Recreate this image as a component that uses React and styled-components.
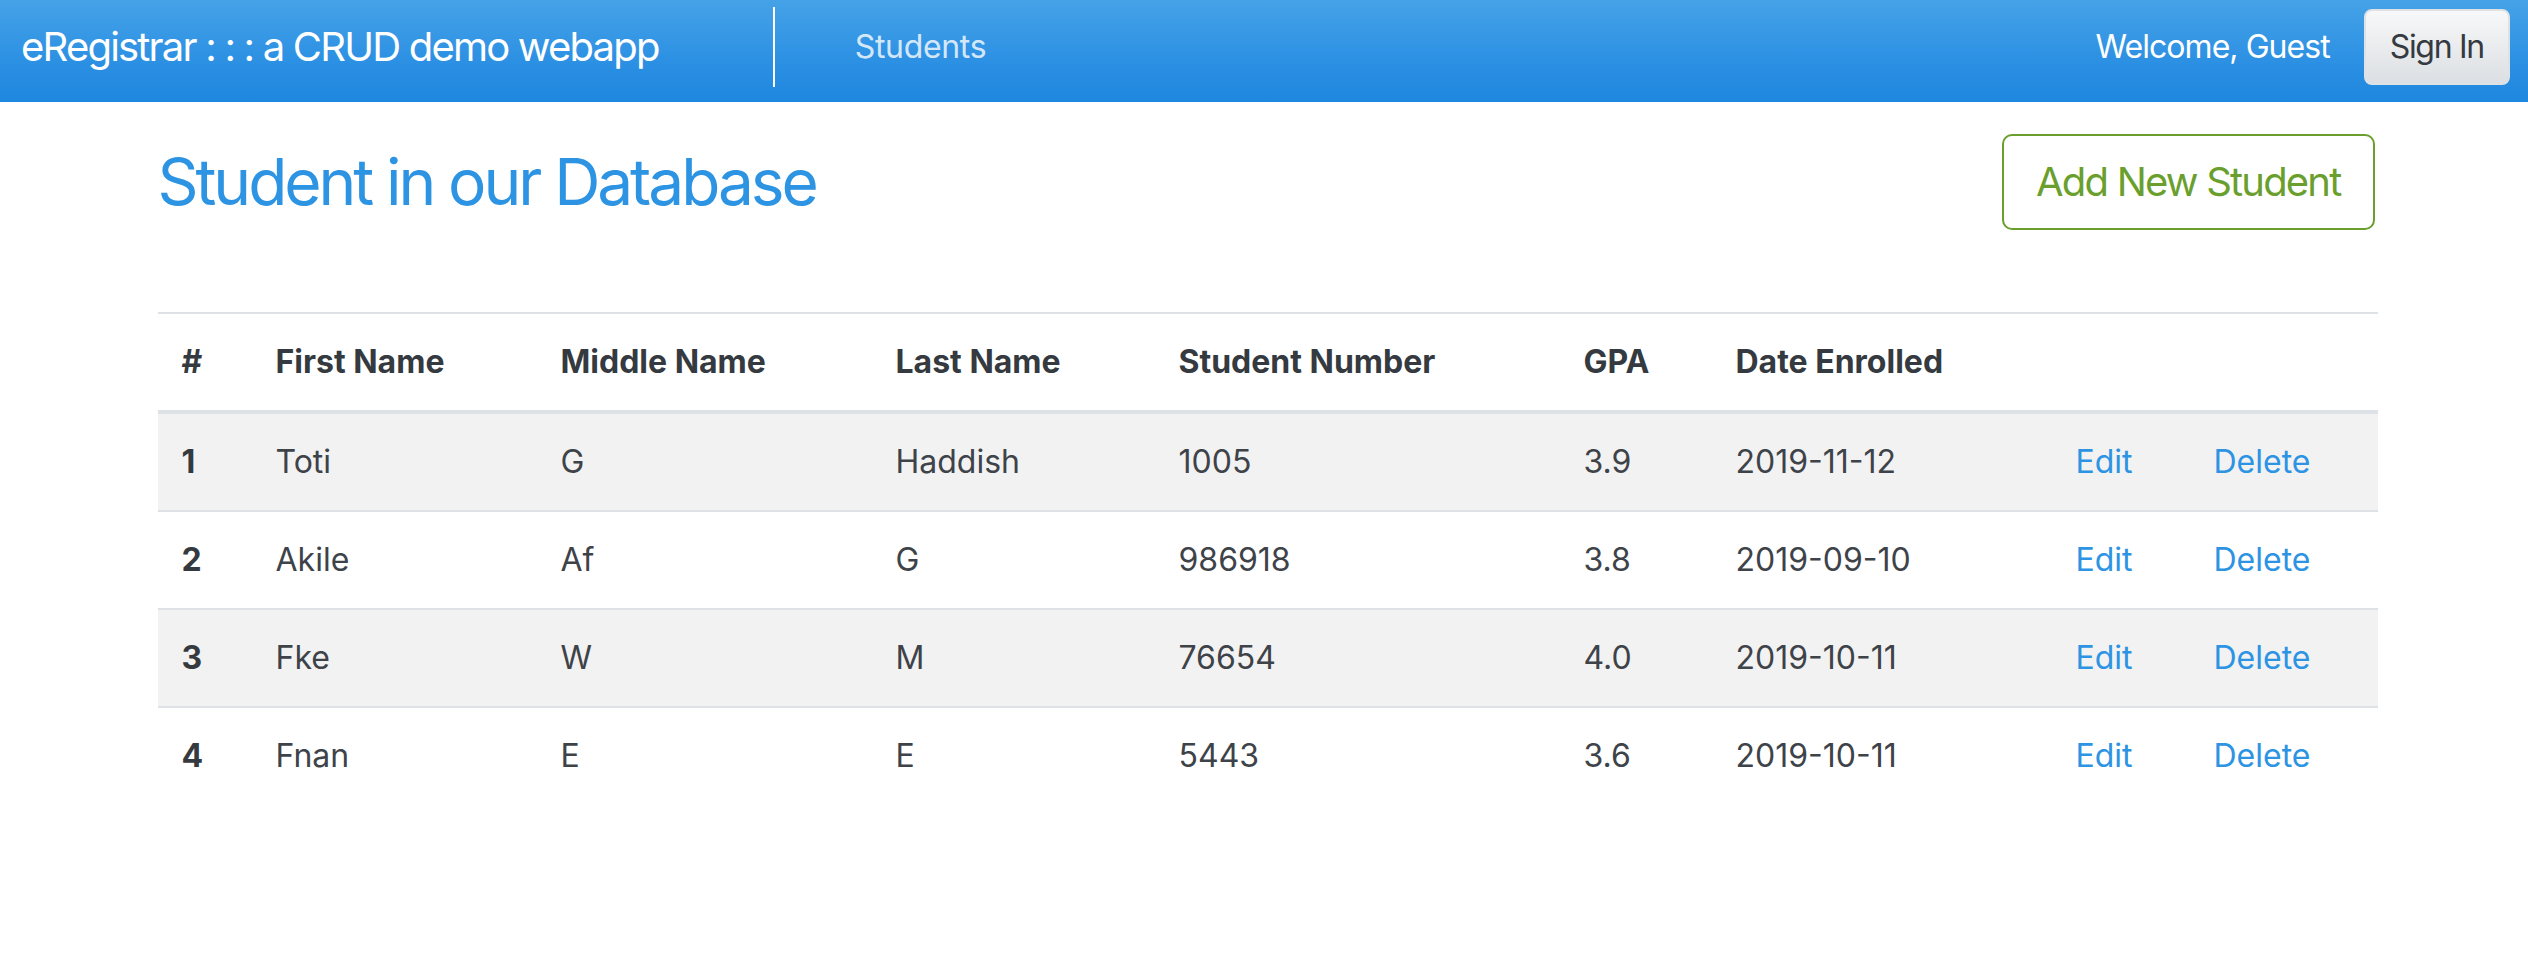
import React from "react";
import styled, { createGlobalStyle } from "styled-components";

const GlobalStyle = createGlobalStyle`
  html, body { margin: 0; padding: 0; background: #ffffff; }
  body {
    font-family: Inter, "Liberation Sans", Arial, sans-serif;
    font-size: 32px;
    line-height: 1.5;
    color: #3e4349;
  }
  * { box-sizing: border-box; }
`;

const NavBar = styled.nav`
  height: 102px;
  display: flex;
  align-items: center;
  padding: 0 18px 8px 21px;
  background: linear-gradient(#45a2e7, #2c90e3 60%, #1e87df);
`;

const Brand = styled.a`
  font-size: 40px;
  letter-spacing: -0.045em;
  color: #ffffff;
  text-decoration: none;
  white-space: nowrap;
  line-height: 1.5;
`;

const Divider = styled.span`
  width: 2px;
  height: 80px;
  background: #ffffff;
  margin-left: ${(p) => p.$left}px;
  margin-right: 80px;
  align-self: center;
`;

const NavLink = styled.a`
  font-size: 32px;
  letter-spacing: -0.01em;
  color: rgba(255, 255, 255, 0.8);
  text-decoration: none;
`;

const Spacer = styled.div`
  flex: 1;
`;

const Welcome = styled.span`
  font-size: 32px;
  letter-spacing: -0.03em;
  color: #ffffff;
  margin-right: 34px;
`;

const SignInButton = styled.button`
  font-family: inherit;
  font-size: 32px;
  letter-spacing: -0.04em;
  line-height: 1.5;
  color: #343a40;
  height: 76px;
  padding: 0 24px;
  border: 2px solid #dfe2e5;
  border-radius: 8px;
  background: linear-gradient(#f7f8f9, #dcdfe3);
`;

const Page = styled.div`
  padding-left: 7px;
`;

const Container = styled.main`
  max-width: 2220px;
  margin: 0 auto;
`;

const HeaderRow = styled.div`
  display: flex;
  align-items: center;
  justify-content: space-between;
  margin-top: 32px;
`;

const Title = styled.h2`
  margin: 0;
  font-size: 64px;
  letter-spacing: -0.048em;
  font-weight: 400;
  line-height: 1.2;
  color: #2d93e3;
`;

const OutlineButton = styled.button`
  font-family: inherit;
  font-size: 40px;
  letter-spacing: -0.045em;
  line-height: 1.5;
  color: #6a9f2e;
  background: #ffffff;
  border: 2px solid #6a9f2e;
  border-radius: 10px;
  padding: 16px 32px;
  margin-right: 3px;
`;

const Table = styled.table`
  width: 100%;
  margin-top: 82px;
  border-collapse: collapse;
  table-layout: fixed;
`;

const HeadCell = styled.th`
  text-align: left;
  font-weight: 700;
  color: #343a40;
  padding: 24px;
  line-height: 48px;
  border-top: 2px solid #dee2e6;
  border-bottom: 4px solid #dee2e6;
  white-space: nowrap;
`;

const Row = styled.tr`
  background: ${(p) => (p.$striped ? "#f2f2f2" : "#ffffff")};
`;

const Cell = styled.td`
  text-align: left;
  padding: 24px;
  line-height: 48px;
  border-top: 2px solid #dee2e6;
  font-weight: ${(p) => (p.$bold ? 700 : 400)};
  color: ${(p) => (p.$bold ? "#343a40" : "#3e4349")};
  white-space: nowrap;
`;

const ActionLink = styled.a`
  color: #2d93e3;
  text-decoration: none;
  cursor: pointer;
`;

const columns = [
  { label: "#", width: 94 },
  { label: "First Name", width: 285 },
  { label: "Middle Name", width: 335 },
  { label: "Last Name", width: 283 },
  { label: "Student Number", width: 405 },
  { label: "GPA", width: 152 },
  { label: "Date Enrolled", width: 340 },
  { label: "", width: 138 },
  { label: "", width: 188 },
];

const students = [
  { id: 1, first: "Toti", middle: "G", last: "Haddish", num: "1005", gpa: "3.9", date: "2019-11-12" },
  { id: 2, first: "Akile", middle: "Af", last: "G", num: "986918", gpa: "3.8", date: "2019-09-10" },
  { id: 3, first: "Fke", middle: "W", last: "M", num: "76654", gpa: "4.0", date: "2019-10-11" },
  { id: 4, first: "Fnan", middle: "E", last: "E", num: "5443", gpa: "3.6", date: "2019-10-11" },
];

export default function App() {
  return (
    <>
      <GlobalStyle />
      <NavBar>
        <Brand href="#">eRegistrar : : : a CRUD demo webapp</Brand>
        <Divider $left={114} />
        <NavLink href="#">Students</NavLink>
        <Spacer />
        <Welcome>Welcome, Guest</Welcome>
        <SignInButton>Sign In</SignInButton>
      </NavBar>
      <Page>
        <Container>
          <HeaderRow>
            <Title>Student in our Database</Title>
            <OutlineButton>Add New Student</OutlineButton>
          </HeaderRow>
          <Table>
            <colgroup>
              {columns.map((c, i) => (
                <col key={i} style={{ width: c.width }} />
              ))}
            </colgroup>
            <thead>
              <tr>
                {columns.map((c, i) => (
                  <HeadCell key={i}>{c.label}</HeadCell>
                ))}
              </tr>
            </thead>
            <tbody>
              {students.map((s, i) => (
                <Row key={s.id} $striped={i % 2 === 0}>
                  <Cell $bold>{s.id}</Cell>
                  <Cell>{s.first}</Cell>
                  <Cell>{s.middle}</Cell>
                  <Cell>{s.last}</Cell>
                  <Cell>{s.num}</Cell>
                  <Cell>{s.gpa}</Cell>
                  <Cell>{s.date}</Cell>
                  <Cell>
                    <ActionLink>Edit</ActionLink>
                  </Cell>
                  <Cell>
                    <ActionLink>Delete</ActionLink>
                  </Cell>
                </Row>
              ))}
            </tbody>
          </Table>
        </Container>
      </Page>
    </>
  );
}
